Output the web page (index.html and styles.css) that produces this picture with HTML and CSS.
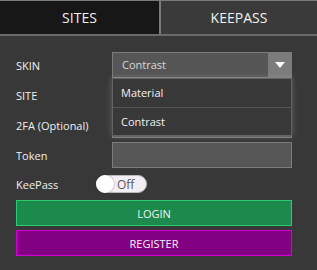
FILE: index.html
```html
<!DOCTYPE html>
<html>
<head>
<meta charset="utf-8">
<link rel="stylesheet" href="styles.css">
</head>
<body>
<div class="app">
  <div class="tabs">
    <div class="tab active">SITES</div>
    <div class="tab">KEEPASS</div>
  </div>
  <div class="form">
    <div class="row">
      <span class="label">SKIN</span>
      <div class="select-wrap">
        <div class="select">
          <span class="select-value">Contrast</span>
          <span class="select-arrow"><svg width="10" height="6" viewBox="0 0 10 6"><path d="M0 0H10L5 6Z" fill="#fff"/></svg></span>
        </div>
        <div class="menu">
          <div class="menu-item">Material</div>
          <div class="menu-item">Contrast</div>
        </div>
      </div>
    </div>
    <div class="row">
      <span class="label">SITE</span>
      <div class="input"></div>
    </div>
    <div class="row">
      <span class="label">2FA (Optional)</span>
      <div class="input"></div>
    </div>
    <div class="row">
      <span class="label">Token</span>
      <div class="input"></div>
    </div>
    <div class="row toggle-row">
      <span class="label short">KeePass</span>
      <div class="toggle"><span class="knob"></span><span class="toggle-text">Off</span></div>
    </div>
    <button class="btn login">LOGIN</button>
    <button class="btn register">REGISTER</button>
  </div>
</div>
</body>
</html>
```
FILE: styles.css
```css
* { box-sizing: border-box; }
html, body { margin: 0; padding: 0; }
body {
  background: #383838;
  font-family: "Open Sans", "Noto Sans", sans-serif;
  color: #e8e8e8;
  width: 317px;
  height: 270px;
  overflow: hidden;
}
.tabs {
  display: flex;
  height: 36px;
  border-top: 1px solid #7a7a7a;
  border-bottom: 2px solid #6a6a6a;
}
.tab {
  flex: 1;
  display: flex;
  align-items: center;
  justify-content: center;
  font-size: 14px;
  color: #f0f0f0;
  background: #3a3a3a;
}
.tab.active {
  background: #171717;
  border-right: 2px solid #7a7a7a;
  flex: 0 0 161px;
}
.form {
  padding: 16px 25px 0 16px;
  display: flex;
  flex-direction: column;
  gap: 4px;
}
.row {
  display: flex;
  align-items: center;
  height: 26px;
}
.label {
  width: 96px;
  font-size: 11px;
  color: #f0f0f0;
  flex: none;
}
.label.short { width: 80px; }
.toggle-row { height: 24px; }
.select-wrap {
  position: relative;
  flex: 1;
  height: 26px;
}
.select {
  display: flex;
  height: 26px;
  border: 1px solid #7c7c7c;
  background: #565656;
}
.select-value {
  flex: 1;
  font-size: 11px;
  color: #d8d8d8;
  padding-left: 9px;
  line-height: 24px;
}
.select-arrow {
  width: 23px;
  background: #7c7c7c;
  display: flex;
  align-items: center;
  justify-content: center;
}
.menu {
  position: absolute;
  left: 0;
  right: 0;
  top: 26px;
  z-index: 2;
  background: #383838;
  border: 1px solid #636363;
  box-shadow: 0 0 6px rgba(170,170,170,0.4);
}
.menu-item {
  height: 28px;
  line-height: 28px;
  padding-left: 8px;
  font-size: 11px;
  color: #f2f2f2;
}
.menu-item + .menu-item { border-top: 1px solid #575757; }
.input {
  flex: 1;
  height: 26px;
  background: #575757;
  border: 1px solid #7c7c7c;
}
.toggle {
  position: relative;
  width: 51px;
  height: 18px;
  border-radius: 9px;
  background: #f2eef4;
  border: 1px solid #bdb8c0;
  display: flex;
  align-items: center;
}
.knob {
  width: 18px;
  height: 18px;
  margin-left: -1px;
  border-radius: 50%;
  background: #fff;
  box-shadow: 0 0 2px rgba(0,0,0,0.4);
}
.toggle-text {
  font-size: 12px;
  color: #5a5a5a;
  margin-left: 3px;
}
.btn {
  display: block;
  width: 100%;
  height: 26px;
  font-family: inherit;
  font-size: 11px;
  color: #f4f4f4;
  padding: 0;
}
.login {
  background: #1b8a4c;
  border: 1px solid #2ecc71;
}
.register {
  background: #820082;
  border: 1px solid #d600d6;
}
```
